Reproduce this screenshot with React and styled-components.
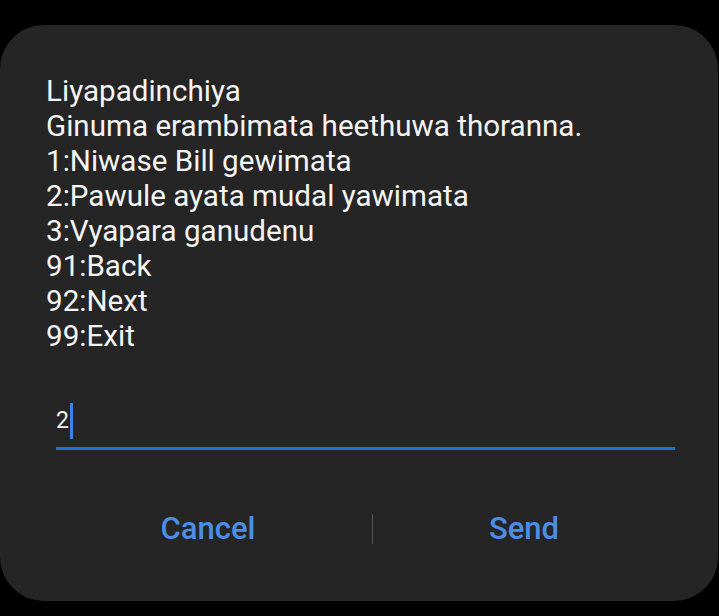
import React from "react";
import styled, { createGlobalStyle } from "styled-components";

const Global = createGlobalStyle`
  html, body { margin: 0; padding: 0; background: #000; }
  body { width: 719px; height: 616px; overflow: hidden; font-family: Roboto, "Noto Sans", sans-serif; }
`;

const Screen = styled.div`
  width: 719px;
  height: 616px;
  padding-top: 25px;
  box-sizing: border-box;
  background: #000;
`;

const Dialog = styled.div`
  width: 718px;
  height: 576px;
  box-sizing: border-box;
  background: #252525;
  border-radius: 44px;
  padding: 49px 43px 0 46px;
  display: flex;
  flex-direction: column;
`;

const Message = styled.div`
  color: #f4f4f4;
  font-size: 29.6px;
  line-height: 35px;
`;

const Line = styled.div`
  white-space: nowrap;
`;

const InputField = styled.div`
  margin: 46px 0 0 10px;
  height: 50px;
  border-bottom: 3px solid #1f6fd5;
  display: flex;
  align-items: center;
  box-sizing: border-box;
  padding-bottom: 6px;
`;

const InputText = styled.span`
  color: #f4f4f4;
  font-size: 23px;
  line-height: 36px;
`;

const Caret = styled.span`
  display: inline-block;
  width: 3px;
  height: 36px;
  background: #3a82e4;
  margin-left: 1px;
`;

const Actions = styled.div`
  margin: 63px 0 0 -2px;
  display: grid;
  grid-template-columns: 328px 1px 302px;
  align-items: center;
  height: 32px;
`;

const ActionButton = styled.button`
  background: none;
  border: none;
  padding: 0;
  color: #4a8fe5;
  font-family: Roboto, "Noto Sans", sans-serif;
  font-weight: 500;
  font-size: 31px;
  line-height: 32px;
  text-align: center;
`;

const Divider = styled.div`
  width: 1px;
  height: 30px;
  background: #555;
`;

const lines = [
  "Liyapadinchiya",
  "Ginuma erambimata heethuwa thoranna.",
  "1:Niwase Bill gewimata",
  "2:Pawule ayata mudal yawimata",
  "3:Vyapara ganudenu",
  "91:Back",
  "92:Next",
  "99:Exit",
];

export default function App() {
  return (
    <>
      <Global />
      <Screen>
        <Dialog>
          <Message>
            {lines.map((l) => (
              <Line key={l}>{l}</Line>
            ))}
          </Message>
          <InputField>
            <InputText>2</InputText>
            <Caret />
          </InputField>
          <Actions>
            <ActionButton>Cancel</ActionButton>
            <Divider />
            <ActionButton>Send</ActionButton>
          </Actions>
        </Dialog>
      </Screen>
    </>
  );
}
